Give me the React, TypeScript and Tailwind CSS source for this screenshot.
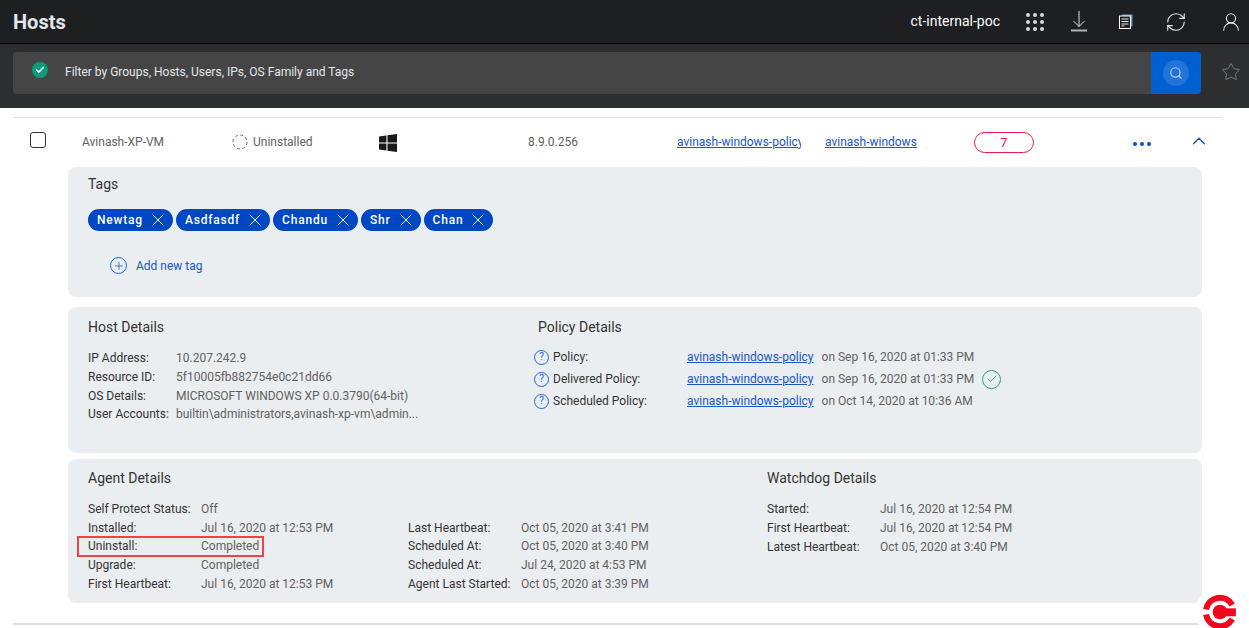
import React from 'react';
import { RefreshCw, Search, Star, UserRound, ChevronUp, X, Plus, Check } from 'lucide-react';

const tags = ['Newtag', 'Asdfasdf', 'Chandu', 'Shr', 'Chan'];

const hostRows = [
  ['IP Address:', '10.207.242.9'],
  ['Resource ID:', '5f10005fb882754e0c21dd66'],
  ['OS Details:', 'MICROSOFT WINDOWS XP 0.0.3790(64-bit)'],
  ['User Accounts:', 'builtin\\administrators,avinash-xp-vm\\admin...'],
];

const policyRows = [
  ['Policy:', 'on Sep 16, 2020 at 01:33 PM', false],
  ['Delivered Policy:', 'on Sep 16, 2020 at 01:33 PM', true],
  ['Scheduled Policy:', 'on Oct 14, 2020 at 10:36 AM', false],
] as const;

const agentLeft = [
  ['Self Protect Status:', 'Off'],
  ['Installed:', 'Jul 16, 2020 at 12:53 PM'],
  ['Uninstall:', 'Completed'],
  ['Upgrade:', 'Completed'],
  ['First Heartbeat:', 'Jul 16, 2020 at 12:53 PM'],
];

const agentMiddle = [
  ['Last Heartbeat:', 'Oct 05, 2020 at 3:41 PM'],
  ['Scheduled At:', 'Oct 05, 2020 at 3:40 PM'],
  ['Scheduled At:', 'Jul 24, 2020 at 4:53 PM'],
  ['Agent Last Started:', 'Oct 05, 2020 at 3:39 PM'],
];

const watchdog = [
  ['Started:', 'Jul 16, 2020 at 12:54 PM'],
  ['First Heartbeat:', 'Jul 16, 2020 at 12:54 PM'],
  ['Latest Heartbeat:', 'Oct 05, 2020 at 3:40 PM'],
];

const Detail = ({ label, value, labelWidth }: { label: string; value: string; labelWidth: string }) => (
  <div className="flex h-[18.67px] items-center text-xs whitespace-nowrap">
    <span className={`${labelWidth} text-[#333]`}>{label}</span>
    <span className="text-[#616161]">{value}</span>
  </div>
);

const GridIcon = () => (
  <svg width="18" height="18" viewBox="0 0 18 18" fill="#d8d8d8">
    {[2, 9, 16].map((cy) =>
      [2, 9, 16].map((cx) => <circle key={`${cx}-${cy}`} cx={cx} cy={cy} r="2" />)
    )}
  </svg>
);

const DownloadIcon = () => (
  <svg width="16" height="21" viewBox="0 0 16 21" fill="none" stroke="#e0e0e0">
    <path d="M8 0v15.5M2.5 10 8 15.5 13.5 10" />
    <path d="M0 19.5h16" stroke="#b0b0b0" strokeWidth="2" />
  </svg>
);

const NotesIcon = () => (
  <svg width="14" height="15" viewBox="0 0 14 15" fill="none">
    <rect x="3" y="0.5" width="10.5" height="12" fill="#5d9fc0" />
    <rect x="0.5" y="2" width="11" height="12.5" fill="#1e1f21" stroke="#fff" />
    <path d="M2.5 5h7M2.5 7.5h7M2.5 10h7M2.5 12h3" stroke="#e8e8e8" />
  </svg>
);

const WindowsIcon = () => (
  <svg width="18" height="18" viewBox="0 0 18 18" fill="#1a1a1a">
    <path d="M0 2.6 7.4 1.5v7H0zM8.5 1.3 18 0v8.5H8.5zM0 9.6h7.4v7L0 15.5zM8.5 9.6H18V18l-9.5-1.3z" />
  </svg>
);

const Logo = () => (
  <svg width="44" height="44" viewBox="0 0 36 36" fill="none">
    <path d="M6.6 16A11.5 11.5 0 0 1 28 12.2M6.6 20A11.5 11.5 0 0 0 28 23.8" stroke="#ee0a1e" strokeWidth="5" />
    <circle cx="18" cy="18" r="6" fill="#ee0a1e" />
    <rect x="18" y="15" width="13" height="6.5" fill="#ee0a1e" />
  </svg>
);

const HelpIcon = () => (
  <span className="flex h-[15px] w-[15px] items-center justify-center rounded-full border border-[#1f66d6] text-[10px] leading-none text-[#1f66d6]">
    ?
  </span>
);

export default function App() {
  return (
    <div className="relative h-[628px] w-[1249px] overflow-hidden bg-white font-['Roboto',sans-serif]">
      <header className="flex h-[44px] items-center border-b border-black bg-[#1e1f21] pr-[7px] pl-[13px]">
        <h1 className="text-xl leading-none font-bold text-[#e4e8ea]">Hosts</h1>
        <span className="mr-[26px] ml-auto pb-[2px] text-sm font-normal text-white">ct-internal-poc</span>
        <GridIcon />
        <span className="ml-[27px]"><DownloadIcon /></span>
        <span className="ml-[32px]"><NotesIcon /></span>
        <RefreshCw size={22} strokeWidth={1.2} className="ml-[32px] text-[#e6e6e6]" />
        <UserRound size={22} strokeWidth={1.2} className="ml-[33px] text-[#e6e6e6]" />
      </header>

      <div className="flex h-[64px] items-center bg-[#2d2e30] pr-[8px] pb-[6px] pl-[13px]">
        <div className="flex h-[42px] w-[1188px] items-center overflow-hidden rounded bg-[#454545]">
          <span className="-mt-[6px] ml-[19px] flex h-4 w-4 items-center justify-center rounded-full bg-[#0b9c78]">
            <Check size={10} strokeWidth={4} className="text-white" />
          </span>
          <span className="ml-[17px] pb-[2px] text-xs text-[#e4e8ea]">Filter by Groups, Hosts, Users, IPs, OS Family and Tags</span>
          <button className="ml-auto flex h-full w-[50px] items-center justify-center bg-[#0060d0]">
            <span className="flex h-[26px] w-[26px] items-center justify-center rounded-full bg-[#2274da]">
              <Search size={14} className="text-[#b8d4f5]" />
            </span>
          </button>
        </div>
        <Star size={20} strokeWidth={1} className="-mt-[2px] ml-auto text-[#8a8a8a]" />
      </div>

      <main className="pt-[9px] pl-[13px]">
        <div className="h-px w-[1209px] bg-[#e0e0e0]" />

        <div className="flex h-[49px] items-center text-xs text-[#616161]">
          <span className="-mt-[6px] ml-[17px] h-4 w-4 rounded-[3px] border border-[#333]" />
          <span className="ml-[36px] w-[150px] pb-[2px]">Avinash-XP-VM</span>
          <span className="flex w-[147px] items-center pb-[2px]">
            <svg width="16" height="16" viewBox="0 0 16 16" fill="none" className="mr-[5px]">
              <circle cx="8" cy="8" r="7" stroke="#666" strokeDasharray="3 2.5" />
            </svg>
            Uninstalled
          </span>
          <span className="w-[149px]"><WindowsIcon /></span>
          <span className="w-[149px] pb-[2px]">8.9.0.256</span>
          <a className="w-[124px] overflow-hidden pb-[2px] whitespace-nowrap text-[#1a56c4] underline">avinash-windows-policy</a>
          <a className="ml-[24px] w-[149px] pb-[2px] text-[#1a56c4] underline">avinash-windows</a>
          <span className="flex h-[21px] w-[60px] items-center justify-center rounded-full border border-[#f5164a] text-[13px] text-[#f5164a]">7</span>
          <span className="ml-[99px] flex gap-[3px] pt-[3px]">
            <i className="h-1 w-1 rounded-full bg-[#0f4fc4]" />
            <i className="h-1 w-1 rounded-full bg-[#0f4fc4]" />
            <i className="h-1 w-1 rounded-full bg-[#0f4fc4]" />
          </span>
          <ChevronUp size={22} strokeWidth={1.4} className="-mt-[3px] ml-[37px] text-[#0f4fc4]" />
        </div>

        <div className="ml-[55px] flex w-[1134px] flex-col">
          <section className="h-[130px] rounded-lg bg-[#ebeef0] pt-[9px] pl-[20px]">
            <h2 className="text-sm leading-4 text-[#333]">Tags</h2>
            <div className="mt-[17px] flex gap-[3px]">
              {tags.map((tag) => (
                <span key={tag} className="flex h-[22px] items-center rounded-full bg-[#0047c4] pr-[10px] pl-[9px] text-xs font-medium tracking-[0.8px] text-white">
                  {tag}
                  <X size={20} strokeWidth={1.1} className="-mr-[5px] ml-[5px]" />
                </span>
              ))}
            </div>
            <div className="mt-[26px] ml-[22px] flex items-center gap-[9px] text-xs text-[#1a56c4]">
              <span className="flex h-[17px] w-[17px] items-center justify-center rounded-full border border-[#1f66d6]">
                <Plus size={12} strokeWidth={1.5} />
              </span>
              Add new tag
            </div>
          </section>

          <section className="mt-[10px] flex h-[146px] rounded-lg bg-[#ebeef0] pt-[12px] pl-[20px]">
            <div className="w-[450px]">
              <h2 className="text-sm leading-4 text-[#333]">Host Details</h2>
              <div className="mt-[14px]">
                {hostRows.map(([label, value]) => (
                  <Detail key={label} label={label} value={value} labelWidth="w-[88px]" />
                ))}
              </div>
            </div>
            <div>
              <h2 className="text-sm leading-4 text-[#333]">Policy Details</h2>
              <div className="mt-[11px] -ml-[4px]">
                {policyRows.map(([label, value, ok]) => (
                  <div key={label} className="flex h-[22px] items-center text-xs whitespace-nowrap">
                    <HelpIcon />
                    <span className="ml-[4px] w-[134px] text-[#333]">{label}</span>
                    <a className="text-[#1a56c4] underline">avinash-windows-policy</a>
                    <span className="ml-[8px] text-[#616161]">{value}</span>
                    {ok && (
                      <span className="ml-[8px] flex h-[19px] w-[19px] items-center justify-center rounded-full border border-[#1fa883]">
                        <Check size={12} strokeWidth={1.5} className="text-[#1fa883]" />
                      </span>
                    )}
                  </div>
                ))}
              </div>
            </div>
          </section>

          <section className="mt-[6px] flex h-[144px] rounded-lg bg-[#ebeef0] pt-[11px] pl-[20px]">
            <div className="w-[320px]">
              <h2 className="text-sm leading-4 text-[#333]">Agent Details</h2>
              <div className="mt-[13.8px]">
                {agentLeft.map(([label, value]) =>
                  label === 'Uninstall:' ? (
                    <div key={label} className="-ml-[10px] w-[185px] pl-[10px] outline-2 -outline-offset-1 outline-[#f04444]">
                      <Detail label={label} value={value} labelWidth="w-[113px]" />
                    </div>
                  ) : (
                    <Detail key={label} label={label} value={value} labelWidth="w-[113px]" />
                  )
                )}
              </div>
            </div>
            <div className="w-[359px] pt-[48.5px]">
              {agentMiddle.map(([label, value]) => (
                <Detail key={label + value} label={label} value={value} labelWidth="w-[113px]" />
              ))}
            </div>
            <div>
              <h2 className="text-sm leading-4 text-[#333]">Watchdog Details</h2>
              <div className="mt-[14px]">
                {watchdog.map(([label, value]) => (
                  <Detail key={label} label={label} value={value} labelWidth="w-[113px]" />
                ))}
              </div>
            </div>
          </section>
        </div>

        <div className="mt-[20px] h-[2px] w-[1189px] bg-[#dedede]" />
      </main>

      <div className="absolute top-[587px] left-[1195px] flex h-[50px] w-[50px] items-center justify-center rounded-full bg-white">
        <Logo />
      </div>
    </div>
  );
}
